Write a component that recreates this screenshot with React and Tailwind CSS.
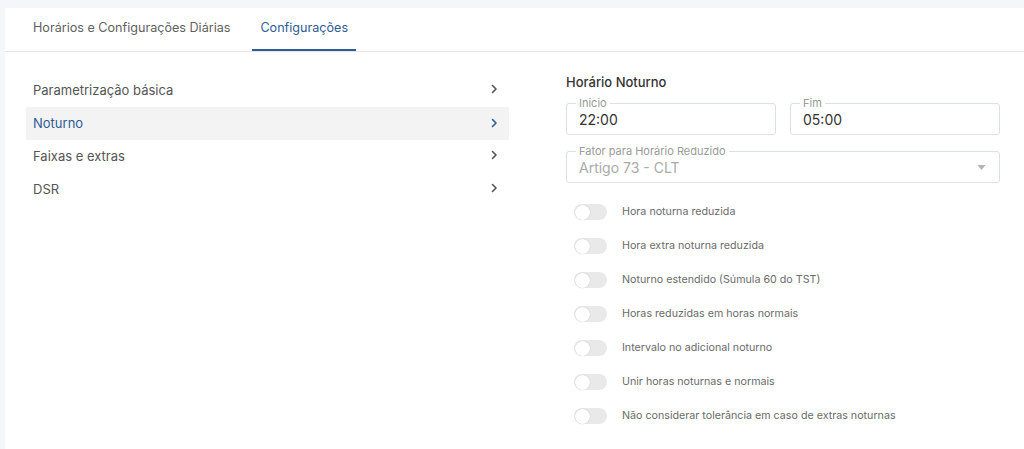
import React, { useState } from 'react';

const menu = ['Parametrização básica', 'Noturno', 'Faixas e extras', 'DSR'];

const options = [
  'Hora noturna reduzida',
  'Hora extra noturna reduzida',
  'Noturno estendido (Súmula 60 do TST)',
  'Horas reduzidas em horas normais',
  'Intervalo no adicional noturno',
  'Unir horas noturnas e normais',
  'Não considerar tolerância em caso de extras noturnas',
];

function Chevron({ className = '' }) {
  return (
    <svg viewBox="0 0 10 10" className={`w-[10px] h-[10px] ${className}`} fill="none" stroke="currentColor" strokeWidth="1.6" strokeLinecap="round" strokeLinejoin="round">
      <path d="M3.5 1.5 L7 5 L3.5 8.5" />
    </svg>
  );
}

function OutlinedField({ label, value, muted = false, select = false, className = '' }) {
  return (
    <div className={`relative h-[32px] border border-[#dcdfe4] rounded-[3px] flex items-center px-3 ${className}`}>
      <span className="absolute -top-[8px] left-[9px] px-[3px] bg-white text-[11px] leading-[14px] text-[#9a9a9a]">{label}</span>
      <span className={`text-[14px] ${muted ? 'text-[#aaaaaa]' : 'text-[#333333]'} mt-[1px]`}>{value}</span>
      {select && (
        <svg viewBox="0 0 10 6" className="ml-auto w-[9px] h-[5px] mr-[1px] text-[#b5b5b5]" fill="currentColor">
          <path d="M0 0 L10 0 L5 6 Z" />
        </svg>
      )}
    </div>
  );
}

function Toggle() {
  return (
    <div className="w-[33px] h-[16px] rounded-full bg-[#e9e9e9] flex items-center px-[1px]">
      <div className="w-[15px] h-[15px] rounded-full bg-white shadow-[0_0_1px_rgba(0,0,0,0.25)]" />
    </div>
  );
}

export default function App() {
  const [active, setActive] = useState(1);
  const [tab, setTab] = useState(1);

  return (
    <div className="w-[1024px] h-[449px] bg-[#f4f6f9] pt-[8px] pl-[5px] overflow-hidden" style={{ fontFamily: 'Inter, "Noto Sans", sans-serif' }}>
      <div className="bg-white h-full">
        <div className="flex h-[44px] border-b border-[#e3e5e8] pl-[20px]">
          {['Horários e Configurações Diárias', 'Configurações'].map((t, i) => (
            <button
              key={t}
              onClick={() => setTab(i)}
              className={`px-[8px] mr-[14px] text-[12.6px] h-full flex items-center border-b-2 ${tab === i ? 'text-[#2d5c96] border-[#2d5c96]' : 'text-[#5f5f5f] border-transparent'}`}
            >
              {t}
            </button>
          ))}
        </div>

        <div className="flex pt-[22px]">
          <div className="w-[483px] ml-[21px]">
            {menu.map((m, i) => (
              <div
                key={m}
                onClick={() => setActive(i)}
                className={`h-[33px] flex items-center justify-between pl-[7px] pr-[10px] text-[13px] cursor-pointer ${active === i ? 'bg-[#f3f3f4] text-[#2d5c96]' : 'text-[#555555]'}`}
              >
                <span>{m}</span>
                <Chevron className={active === i ? 'text-[#2d5c96] -mt-[2px]' : 'text-[#555555] -mt-[4px]'} />
              </div>
            ))}
          </div>

          <div className="ml-[57px] w-[434px]">
            <div className="text-[13px] font-medium text-[#333333] leading-[16px]">Horário Noturno</div>
            <div className="flex gap-[14px] mt-[13px]">
              <OutlinedField label="Inicio" value="22:00" className="flex-1" />
              <OutlinedField label="Fim" value="05:00" className="flex-1" />
            </div>
            <OutlinedField label="Fator para Horário Reduzido" value="Artigo 73 - CLT" muted select className="mt-[16px]" />

            <div className="mt-[12px] pl-[8px]">
              {options.map((o) => (
                <div key={o} className="h-[34px] flex items-center">
                  <Toggle />
                  <span className="ml-[15px] text-[10.7px] text-[#6b6b6b]">{o}</span>
                </div>
              ))}
            </div>
          </div>
        </div>
      </div>
    </div>
  );
}
